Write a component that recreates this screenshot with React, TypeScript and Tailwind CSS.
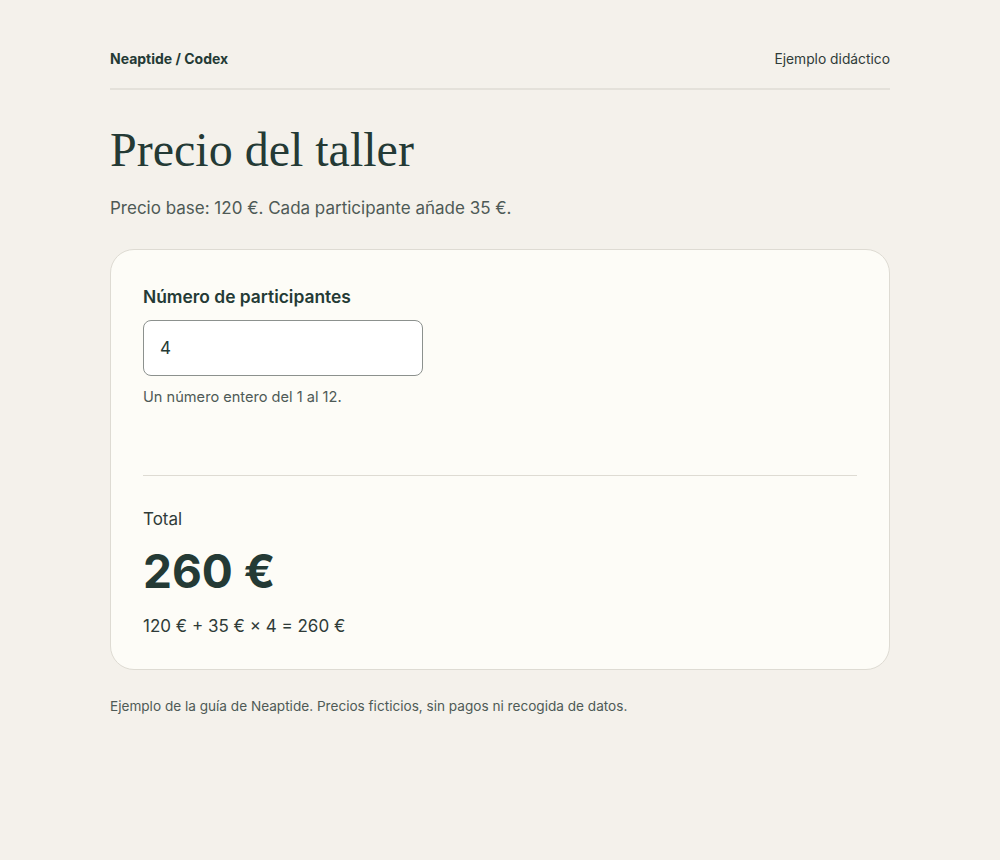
import React, { useState } from 'react';

const BASE = 120;
const PER_PERSON = 35;

const App: React.FC = () => {
  const [count, setCount] = useState('4');
  const n = Math.min(12, Math.max(1, parseInt(count, 10) || 1));
  const total = BASE + PER_PERSON * n;

  return (
    <div className="min-h-[860px] bg-[#f4f1eb] text-[#243a35] [font-family:Inter,'Noto_Sans',sans-serif]">
      <div className="mx-auto w-[780px] pt-[48px]">
        <header className="flex items-baseline justify-between border-b-2 border-[#e4e1da] pb-[18px]">
          <span className="text-[14px] font-bold">Neaptide / Codex</span>
          <span className="text-[13.8px] text-[#2f3b38]">Ejemplo didáctico</span>
        </header>

        <h1 className="mt-[33px] text-[48px] leading-[1.12] text-[#243a35] [font-family:'Liberation_Serif',Georgia,serif]">
          Precio del taller
        </h1>
        <p className="mt-[20px] text-[17px] text-[#4e5a56]">
          Precio base: 120 €. Cada participante añade 35 €.
        </p>

        <section className="mt-[27px] rounded-[24px] border border-[#dedbd3] bg-[#fdfcf7] px-[32px] pb-[30px] pt-[34px]">
          <label htmlFor="participantes" className="block text-[17.4px] font-semibold text-[#243a35]">
            Número de participantes
          </label>
          <input
            id="participantes"
            type="text"
            inputMode="numeric"
            value={count}
            onChange={(e) => setCount(e.target.value)}
            className="mt-[10px] block h-[56px] w-[280px] rounded-[8px] border border-[#8c918e] bg-white px-[16px] text-[17px] text-[#243a35] outline-none"
          />
          <p className="mt-[11px] text-[14.6px] text-[#4e5a56]">Un número entero del 1 al 12.</p>

          <hr className="mt-[66px] border-0 border-t border-[#dedbd3]" />

          <p className="mt-[31px] text-[17px] text-[#2f3b38]">Total</p>
          <p className="mt-[12px] text-[46px] font-bold leading-[1.2] text-[#243a35]">{total} €</p>
          <p className="mt-[14px] text-[17px] text-[#2f3b38]">
            {BASE} € + {PER_PERSON} € × {n} = {total} €
          </p>
        </section>

        <p className="mt-[26px] text-[13.6px] text-[#4e5a56]">
          Ejemplo de la guía de Neaptide. Precios ficticios, sin pagos ni recogida de datos.
        </p>
      </div>
    </div>
  );
};

export default App;
